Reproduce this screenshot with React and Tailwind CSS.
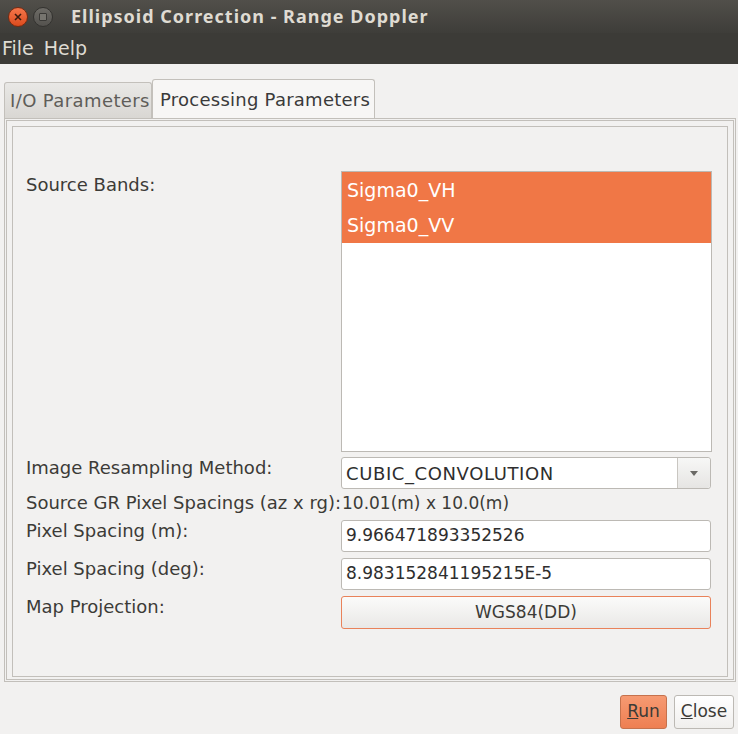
import React from 'react';

const font = { fontFamily: '"DejaVu Sans", "Noto Sans", sans-serif' };

function Field({ children, className = '' }) {
  return (
    <div
      className={`h-[32px] w-[370px] rounded-[3px] border border-[#bcb9b4] bg-white px-[4px] flex items-center text-[17px] text-[#2e2e2e] ${className}`}
    >
      {children}
    </div>
  );
}

function Row({ label, children, className = '' }) {
  return (
    <div className={`flex items-start ${className}`}>
      <div className="w-[315px] leading-[22px] text-[18px] text-[#3c3b37] whitespace-nowrap">{label}</div>
      {children}
    </div>
  );
}

export default function App() {
  return (
    <div className="w-[738px] h-[734px] flex flex-col bg-[#f2f1f0] overflow-hidden" style={font}>
      {/* title bar */}
      <div className="h-[33px] flex items-center bg-gradient-to-b from-[#514f4a] to-[#3e3d39] pl-[8px]">
        <div className="w-[20px] h-[20px] rounded-full bg-gradient-to-b from-[#f5764a] to-[#dc4b1c] border border-[#7a2a10] flex items-center justify-center">
          <svg width="8" height="8" viewBox="0 0 8 8">
            <path d="M1 1 L7 7 M7 1 L1 7" stroke="#3a1a0e" strokeWidth="1.6" />
          </svg>
        </div>
        <div className="ml-[5px] w-[20px] h-[20px] rounded-full bg-gradient-to-b from-[#6e6c67] to-[#54524e] border border-[#33322f] flex items-center justify-center">
          <div className="w-[8px] h-[8px] border-[1.5px] border-[#3a3936] bg-[#77756f] rounded-[1px]" />
        </div>
        <div
          className="ml-[18px] text-[18px] font-bold text-[#dfdbd2] tracking-[1px]"
          style={{ fontFamily: '"Noto Sans", sans-serif' }}
        >
          Ellipsoid Correction - Range Doppler
        </div>
      </div>
      {/* menu bar */}
      <div className="h-[31px] bg-[#3c3b37] flex items-center gap-[10px] px-[2px] text-[19px] text-[#dfdbd2]">
        <span>File</span>
        <span>Help</span>
      </div>

      {/* content */}
      <div className="flex-1 flex flex-col px-[4px] pt-[15px]">
        {/* tabs */}
        <div className="flex items-end h-[39px]">
          <div className="h-[36px] w-[148px] rounded-t-[3px] border border-b-0 border-[#c3c0bb] bg-gradient-to-b from-[#e9e8e6] to-[#d9d7d3] text-[18px] tracking-[0.4px] text-[#5f5d59] flex items-center pl-[5px] whitespace-nowrap overflow-hidden">
            I/O Parameters
          </div>
          <div className="h-[39px] w-[223px] rounded-t-[3px] border border-b-0 border-[#c3c0bb] bg-[#f7f6f5] text-[18px] tracking-[0.25px] text-[#3a3a3a] flex items-center pl-[7px] whitespace-nowrap">
            Processing Parameters
          </div>
        </div>
        {/* panel */}
        <div className="w-[732px] h-[564px] border border-[#c2bfba] p-px">
          <div className="w-full h-full border border-[#c2bfba] px-[5px] pt-[5px]">
            <div className="w-[716px] h-[551px] border border-[#c2bfba] pl-[13px] pt-[44px]">
              <Row label={<div className="pt-[3px]">Source Bands:</div>}>
                <div className="w-[371px] h-[281px] border border-[#bcb9b4] bg-white">
                  <div className="h-[36px] bg-[#f07746] text-white text-[19px] flex items-center pl-[5px]">Sigma0_VH</div>
                  <div className="h-[35px] bg-[#f07746] text-white text-[19px] flex items-center pl-[5px]">Sigma0_VV</div>
                </div>
              </Row>
              <Row label="Image Resampling Method:" className="mt-[5px]">
                <div className="h-[32px] w-[370px] rounded-[3px] border border-[#bcb9b4] bg-white flex">
                  <div className="flex-1 flex items-center px-[4px] text-[18px] tracking-[0.6px] text-[#2e2e2e]">CUBIC_CONVOLUTION</div>
                  <div className="w-[33px] border-l border-[#c9c6c1] bg-gradient-to-b from-[#f7f7f6] to-[#e6e5e3] rounded-r-[3px] flex items-center justify-center">
                    <svg width="8" height="5" viewBox="0 0 8 5">
                      <path d="M0 0 H8 L4 5 Z" fill="#6a6965" />
                    </svg>
                  </div>
                </div>
              </Row>
              <div className="flex mt-[3px] leading-[22px] text-[#3c3b37]">
                <div className="w-[316px] whitespace-nowrap text-[18px]">Source GR Pixel Spacings (az x rg):</div>
                <div className="text-[17px]">10.01(m) x 10.0(m)</div>
              </div>
              <Row label="Pixel Spacing (m):" className="mt-[6px]">
                <Field>9.966471893352526</Field>
              </Row>
              <Row label="Pixel Spacing (deg):" className="mt-[6px]">
                <Field className="h-[31px]">8.983152841195215E-5</Field>
              </Row>
              <Row label="Map Projection:" className="mt-[6px]">
                <div className="h-[33px] w-[370px] rounded-[3px] border border-[#e9825a] bg-gradient-to-b from-[#fbfbfa] to-[#e9e8e6] flex items-center justify-center text-[17px] text-[#3c3b37]">
                  WGS84(DD)
                </div>
              </Row>
            </div>
          </div>
        </div>
        {/* buttons */}
        <div className="flex justify-end gap-[7px] mt-[13px]">
          <div className="h-[34px] w-[47px] rounded-[3px] border border-[#c5724d] bg-gradient-to-b from-[#f69a72] to-[#ee7f52] flex items-center justify-center text-[17px] text-[#3c3b37]">
            <span><span className="underline">R</span>un</span>
          </div>
          <div className="h-[34px] w-[60px] rounded-[3px] border border-[#bcb9b4] bg-gradient-to-b from-[#ffffff] to-[#f0efed] flex items-center justify-center text-[17px] text-[#3c3b37]">
            <span><span className="underline">C</span>lose</span>
          </div>
        </div>
      </div>
    </div>
  );
}
